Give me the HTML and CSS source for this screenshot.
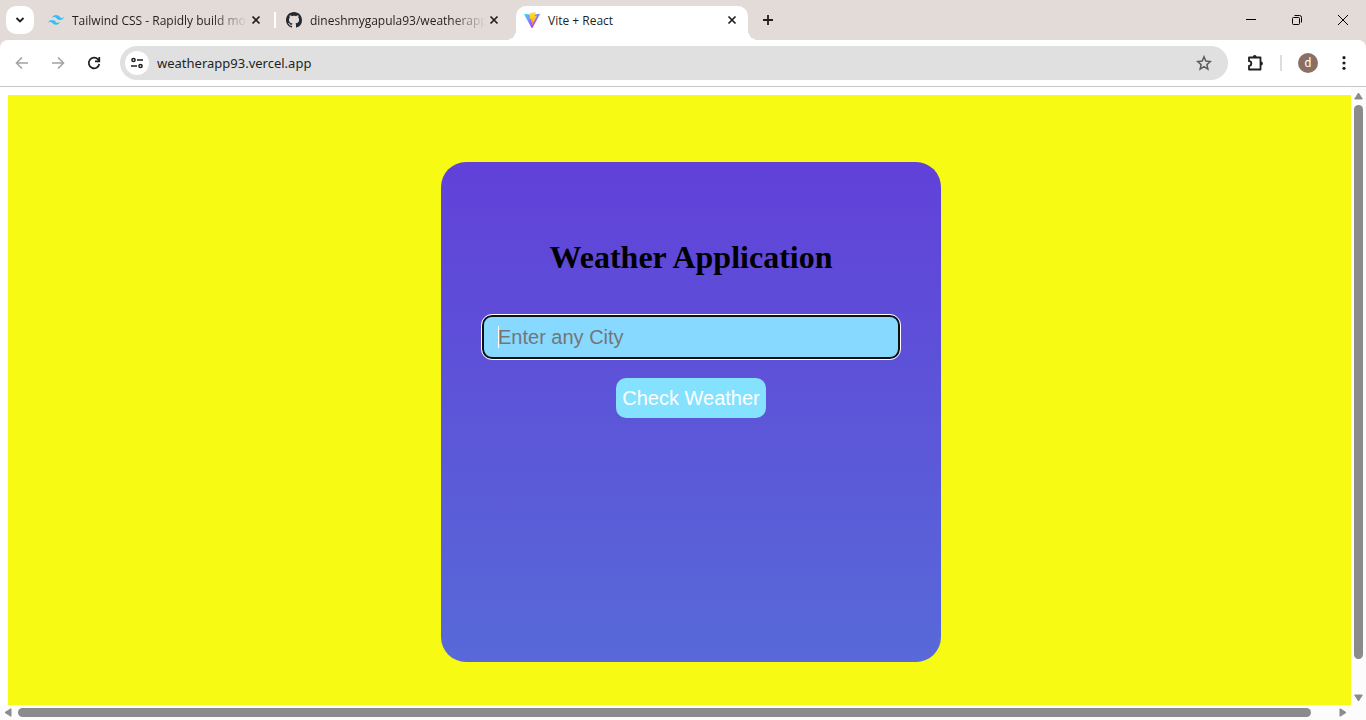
FILE: index.html
```html
<!DOCTYPE html>
<html lang="en">
<head>
<meta charset="utf-8">
<title>Vite + React</title>
<link rel="stylesheet" href="styles.css">
</head>
<body>
<div class="browser">
  <header class="tabstrip">
    <button class="tab-search" aria-label="Search tabs"><svg width="28" height="28" viewBox="0 0 28 28"><path d="M10.500 12l3.500 3.500 3.500-3.500" fill="none" stroke="#1f1f1f" stroke-width="1.800"/></svg></button>
    <nav class="tabs">
      <div class="tab">
        <svg class="favicon" viewBox="0 0 54 33"><path fill="#38bdf8" fill-rule="evenodd" d="M27 0c-7.2 0-11.7 3.6-13.5 10.8 2.7-3.6 5.85-4.95 9.45-4.05 2.054.513 3.522 2.004 5.147 3.653C30.744 13.09 33.808 16.2 40.5 16.2c7.2 0 11.7-3.6 13.5-10.8-2.7 3.6-5.85 4.95-9.45 4.05-2.054-.513-3.522-2.004-5.147-3.653C36.756 3.11 33.692 0 27 0zM13.5 16.2C6.3 16.2 1.8 19.8 0 27c2.7-3.6 5.85-4.95 9.45-4.05 2.054.514 3.522 2.004 5.147 3.653C17.244 29.29 20.308 32.4 27 32.4c7.2 0 11.7-3.6 13.5-10.8-2.7 3.6-5.85 4.95-9.45 4.05-2.054-.513-3.522-2.004-5.147-3.653C23.256 19.31 20.192 16.2 13.5 16.2z"/></svg>
        <a class="tab-title tab-title-faded" href="#">Tailwind CSS - Rapidly build mo</a>
        <button class="tab-close" aria-label="Close tab"><svg width="16" height="16" viewBox="0 0 16 16"><path d="M4.500 4.500l7 7m0-7l-7 7" stroke="#1f1f1f" stroke-width="1.700"/></svg></button>
      </div>
      <span class="tab-divider"></span>
      <div class="tab">
        <svg class="favicon" viewBox="0 0 16 16"><path fill="#24292f" d="M8 0C3.580 0 0 3.580 0 8c0 3.540 2.290 6.530 5.470 7.590.4.070.55-.17.55-.38 0-.19-.01-.82-.01-1.490-2.010.37-2.530-.49-2.690-.94-.09-.23-.48-.94-.82-1.130-.28-.15-.68-.52-.01-.53.63-.01 1.080.58 1.230.82.72 1.210 1.870.87 2.330.66.070-.52.28-.87.51-1.070-1.780-.2-3.640-.89-3.640-3.950 0-.87.31-1.590.82-2.150-.08-.2-.36-1.020.08-2.120 0 0 .67-.21 2.200.82.64-.18 1.320-.27 2-.27s1.360.09 2 .27c1.530-1.040 2.200-.82 2.200-.82.44 1.100.16 1.920.08 2.120.51.56.82 1.270.82 2.150 0 3.070-1.870 3.750-3.650 3.950.29.25.54.73.54 1.480 0 1.070-.01 1.930-.01 2.200 0 .21.15.46.55.38A8.010 8.010 0 0 0 16 8c0-4.420-3.580-8-8-8z"/></svg>
        <a class="tab-title tab-title-faded" href="#">dineshmygapula93/weatherapp</a>
        <button class="tab-close" aria-label="Close tab"><svg width="16" height="16" viewBox="0 0 16 16"><path d="M4.500 4.500l7 7m0-7l-7 7" stroke="#1f1f1f" stroke-width="1.700"/></svg></button>
      </div>
      <div class="tab tab-active">
        <svg class="favicon" viewBox="0 0 256 257"><defs><linearGradient id="vite-body" x1="0" x2=".6" y1=".1" y2=".9"><stop offset="0" stop-color="#41d1ff"/><stop offset="1" stop-color="#bd34fe"/></linearGradient><linearGradient id="vite-bolt" x1=".4" x2=".5" y1="0" y2="1"><stop offset="0" stop-color="#ffea83"/><stop offset=".1" stop-color="#ffdd35"/><stop offset="1" stop-color="#ffa800"/></linearGradient></defs><path fill="url(#vite-body)" d="M255 38L134 255c-3 4-9 4-12 0L1 38c-3-6 2-12 8-11l119 21 119-21c6-1 11 5 8 11z"/><path fill="url(#vite-bolt)" d="M185 0L97 17c-2 0-3 2-3 4l-5 91c0 3 2 5 4 4l25-6c2 0 4 2 4 4l-8 37c0 2 2 5 4 4l15-5c3-1 5 2 5 4l-12 56c0 4 4 5 6 3l1-3 72-144c1-2-1-5-4-5l-25 5c-3 0-5-2-4-4l17-57c0-3-2-5-4-5z"/></svg>
        <a class="tab-title" href="#">Vite + React</a>
        <button class="tab-close" aria-label="Close tab"><svg width="16" height="16" viewBox="0 0 16 16"><path d="M4.500 4.500l7 7m0-7l-7 7" stroke="#1f1f1f" stroke-width="1.700"/></svg></button>
      </div>
    </nav>
    <button class="new-tab" aria-label="New tab"><svg width="16" height="16" viewBox="0 0 16 16"><path d="M3 8h10M8 3v10" stroke="#1f1f1f" stroke-width="1.800"/></svg></button>
    <div class="window-controls">
      <button aria-label="Minimize"><svg width="12" height="12" viewBox="0 0 12 12"><path d="M1 5.500h10" stroke="#000"/></svg></button>
      <button aria-label="Restore"><svg width="12" height="12" viewBox="0 0 12 12" fill="none" stroke="#000"><rect x="1.500" y="3.500" width="7" height="7" rx="1"/><path d="M3.500 1.500h5a2 2 0 0 1 2 2v5"/></svg></button>
      <button aria-label="Close window"><svg width="12" height="12" viewBox="0 0 12 12"><path d="M1 1l10 10M11 1L1 11" stroke="#000"/></svg></button>
    </div>
  </header>

  <div class="toolbar">
    <div class="nav-buttons">
      <button aria-label="Back"><svg width="16" height="16" viewBox="0 0 16 16"><path d="M14 8H3m5-5.500L2.500 8 8 13.500" fill="none" stroke="#a3a3a3" stroke-width="1.600"/></svg></button>
      <button aria-label="Forward"><svg width="16" height="16" viewBox="0 0 16 16"><path d="M2 8h11M8 2.500L13.500 8 8 13.500" fill="none" stroke="#a3a3a3" stroke-width="1.600"/></svg></button>
      <button aria-label="Reload"><svg width="16" height="16" viewBox="0 0 16 16"><path d="M13.300 9A5.300 5.300 0 1 1 12 4.400l1 1M13.300 2v4.300H9" fill="none" stroke="#1f1f1f" stroke-width="1.700"/></svg></button>
    </div>
    <div class="address-bar">
      <button class="site-info" aria-label="Site information"><svg width="16" height="16" viewBox="0 0 16 16" fill="none" stroke="#1f1f1f" stroke-width="1.500"><circle cx="4.500" cy="5" r="1.600"/><path d="M8 5h6M2 11h6"/><circle cx="11.500" cy="11" r="1.600"/></svg></button>
      <input class="url" type="text" aria-label="Address" value="weatherapp93.vercel.app">
      <button class="bookmark" aria-label="Bookmark this tab"><svg width="16" height="16" viewBox="0 0 16 16"><path d="M8 1.800l1.800 4.300 4.600.4-3.500 3.100 1 4.500L8 11.700l-3.900 2.400 1-4.500-3.500-3.100 4.600-.4z" fill="none" stroke="#5c5c5c" stroke-width="1.500"/></svg></button>
    </div>
    <div class="toolbar-actions">
      <button aria-label="Extensions"><svg width="20" height="20" viewBox="0 0 20 20"><path d="M4 4.500h11.500v12H4v-3.700a2.300 2.300 0 0 0 0-4.600z" fill="none" stroke="#1f1f1f" stroke-width="1.800" stroke-linejoin="round"/><path d="M7.800 4a1.900 1.900 0 0 1 3.800 0zM16 8.600a1.900 1.900 0 0 1 0 3.800z" fill="#1f1f1f"/></svg></button>
      <span class="toolbar-divider"></span>
      <button class="profile" aria-label="Profile"><span class="avatar">d</span></button>
      <button aria-label="Menu"><svg width="16" height="16" viewBox="0 0 16 16" fill="#1f1f1f"><circle cx="8" cy="2.700" r="1.600"/><circle cx="8" cy="8" r="1.600"/><circle cx="8" cy="13.300" r="1.600"/></svg></button>
    </div>
  </div>

  <div class="viewport">
    <main class="page">
      <div class="app">
        <form class="card">
          <h1 class="title">Weather Application</h1>
          <input class="city" type="text" placeholder="Enter any City" aria-label="City">
          <button class="check" type="button">Check Weather</button>
        </form>
      </div>
    </main>
    <div class="scrollbar scrollbar-y">
      <svg width="9" height="8" viewBox="0 0 9 8"><path d="M4.500 1L8.300 7H.7z" fill="#8b8b8b" stroke="#8b8b8b" stroke-linejoin="round"/></svg>
      <span class="track"><span class="thumb"></span></span>
      <svg width="9" height="8" viewBox="0 0 9 8"><path d="M4.500 7L8.300 1H.7z" fill="#8b8b8b" stroke="#8b8b8b" stroke-linejoin="round"/></svg>
    </div>
    <div class="scrollbar scrollbar-x">
      <svg width="8" height="9" viewBox="0 0 8 9"><path d="M1 4.500L7 .7v7.600z" fill="#8b8b8b" stroke="#8b8b8b" stroke-linejoin="round"/></svg>
      <span class="track"><span class="thumb"></span></span>
      <svg width="8" height="9" viewBox="0 0 8 9"><path d="M7 4.500L1 .7v7.600z" fill="#8b8b8b" stroke="#8b8b8b" stroke-linejoin="round"/></svg>
    </div>
    <span class="scroll-corner"></span>
  </div>
</div>
</body>
</html>
```
FILE: styles.css
```css
* {
  box-sizing: border-box;
}

body {
  margin: 0;
  background: #e3dbd8;
  overflow: hidden;
}

button,
input {
  border: 0;
  margin: 0;
  padding: 0;
  background: none;
}

svg {
  display: block;
}

.browser {
  display: flex;
  flex-direction: column;
  height: 100vh;
  font-family: "Open Sans", sans-serif;
  color: #1f1f1f;
}

.browser button {
  display: flex;
  align-items: center;
  justify-content: center;
}

/* Tab strip */
.tabstrip {
  display: flex;
  align-items: center;
  height: 40px;
  padding-left: 6px;
}

.browser .tab-search {
  width: 28px;
  height: 28px;
  border-radius: 10px;
  background: #fff;
}

.tabs {
  display: flex;
  align-self: stretch;
  align-items: center;
  gap: 6px;
  margin-left: 6px;
}

.tab {
  display: flex;
  align-items: center;
  gap: 8px;
  width: 232px;
  height: 34px;
  padding: 0 8px;
}

.tab-divider {
  width: 2px;
  height: 16px;
  margin: 0 -4px;
  background: #fff;
}

.tab-active {
  position: relative;
  align-self: flex-end;
  padding-bottom: 6px;
  border-radius: 10px 10px 0 0;
  background: #fff;
}

.tab-active::before,
.tab-active::after {
  content: "";
  position: absolute;
  bottom: 0;
  width: 10px;
  height: 10px;
}

.tab-active::before {
  right: 100%;
  background: radial-gradient(circle at 0 0, transparent 10px, #fff 10px);
}

.tab-active::after {
  left: 100%;
  background: radial-gradient(circle at 100% 0, transparent 10px, #fff 10px);
}

.favicon {
  width: 16px;
  height: 16px;
  flex: none;
}

.tab-title {
  flex: 1;
  min-width: 0;
  padding-top: 2px;
  white-space: nowrap;
  color: inherit;
  font-size: 12px;
  line-height: 18px;
  text-decoration: none;
}

.tab-title-faded {
  margin-right: -12px;
  background: linear-gradient(to right, #1f1f1f 140px, #e3dbd8 176px);
  background-clip: text;
  color: transparent;
}

.new-tab {
  width: 28px;
  height: 28px;
  margin-left: 6px;
}

.window-controls {
  display: flex;
  margin-left: auto;
}

.window-controls button {
  width: 46px;
  height: 40px;
}

/* Toolbar */
.toolbar {
  display: flex;
  align-items: center;
  height: 47px;
  padding: 0 5px;
  border-bottom: 1px solid #c8c8c8;
  border-radius: 8px 8px 0 0;
  background: #fff;
}

.nav-buttons {
  display: flex;
  gap: 2px;
}

.nav-buttons button,
.toolbar-actions button {
  width: 34px;
  height: 34px;
}

.address-bar {
  display: flex;
  align-items: center;
  flex: 1;
  height: 34px;
  margin-left: 9px;
  padding: 0 16px 0 5px;
  border-radius: 17px;
  background: #e0e0e0;
}

.browser .site-info {
  width: 24px;
  height: 24px;
  border-radius: 12px;
  background: #fff;
}

.url {
  flex: 1;
  margin: 0 8px;
  color: #1f1f1f;
  font: 13px/20px "Noto Sans", sans-serif;
  outline: 0;
}

.toolbar-actions {
  display: flex;
  align-items: center;
  margin-left: 10px;
}

.toolbar-divider {
  width: 2px;
  height: 16px;
  margin: 0 9px 0 8px;
  background: #e3dbd8;
}

.browser .profile {
  margin-right: 2px;
}

.avatar {
  width: 20px;
  height: 20px;
  border-radius: 10px;
  background: #8d6e63;
  color: #fff;
  font: 12px/20px Roboto, sans-serif;
  text-align: center;
}

/* Viewport */
.viewport {
  display: grid;
  grid-template: minmax(0, 1fr) 15px / minmax(0, 1fr) 15px;
  flex: 1;
  min-height: 0;
  background: #fff;
}

.page {
  overflow: hidden;
  padding: 8px 0 0 8px;
}

.app {
  display: flex;
  justify-content: center;
  width: 100vw;
  min-height: 100vh;
  padding-top: 67px;
  background: #f7fa13;
}

.card {
  display: flex;
  flex-direction: column;
  align-items: center;
  align-self: flex-start;
  width: 500px;
  min-height: 500px;
  padding: 76px 41px 40px;
  border-radius: 25px;
  background: linear-gradient(#6141d9, #5869d8);
}

.title {
  margin: 0;
  color: #000;
  font: bold 32px/38px "Liberation Serif", serif;
}

/* Shown in its focused state, with the caret before the placeholder */
.city {
  width: 100%;
  height: 44px;
  margin-top: 39px;
  padding: 0 14px;
  border: 2px solid #101010;
  border-radius: 10px;
  background: linear-gradient(#fff, #fff) 14px center / 1px 22px no-repeat #87d9ff;
  color: #fff;
  font: 20px/24px "Liberation Sans", sans-serif;
  outline: 1px solid #fff;
}

.city::placeholder {
  color: #757575;
  opacity: 1;
}

.check {
  width: 150px;
  height: 40px;
  margin-top: 19px;
  border-radius: 10px;
  background: #84e2ff;
  color: #fff;
  font: 20px/24px "Liberation Sans", sans-serif;
}

/* Scrollbars */
.scrollbar {
  display: flex;
  align-items: center;
  background: #fcfcfc;
}

.scrollbar-y {
  flex-direction: column;
  padding: 5px 0 3px;
}

.scrollbar-x {
  padding: 0 4px;
}

.track {
  display: flex;
  flex: 1;
}

.thumb {
  border-radius: 5px;
  background: #8b8b8b;
}

.scrollbar-y .track {
  flex-direction: column;
  width: 9px;
  margin: 5px 0 0;
}

.scrollbar-y .thumb {
  height: 94%;
}

.scrollbar-x .track {
  height: 9px;
  margin-left: 6px;
  padding-right: 2px;
}

.scrollbar-x .thumb {
  width: 98%;
}

.scroll-corner {
  background: #fcfcfc;
}
```
